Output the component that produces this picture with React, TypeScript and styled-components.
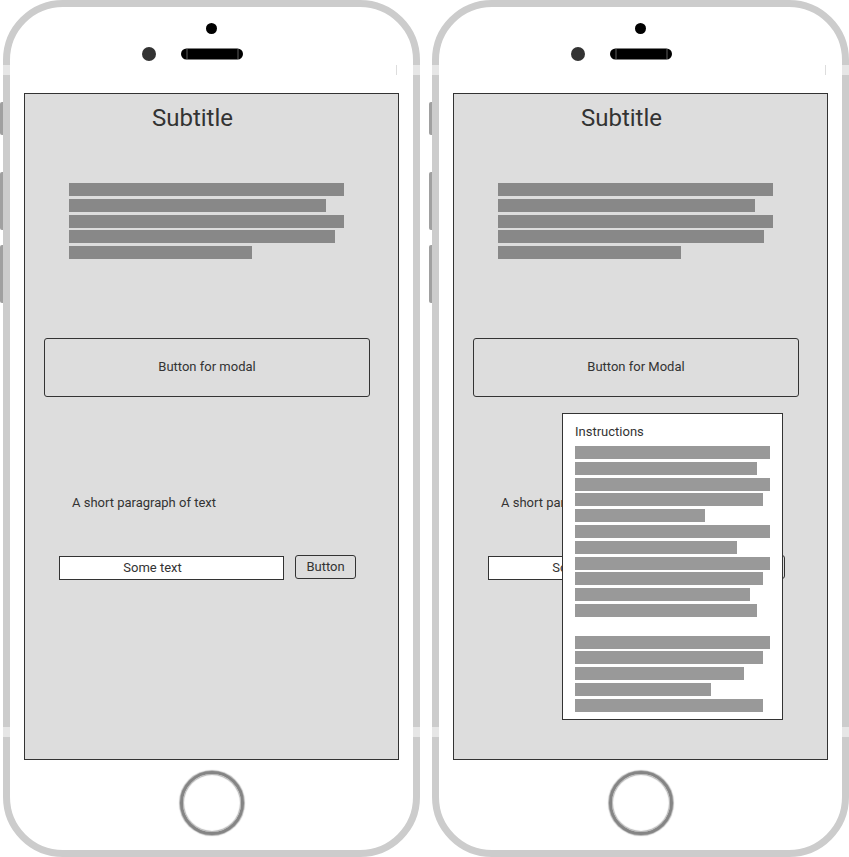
import React from 'react';
import styled, { createGlobalStyle } from 'styled-components';

const GlobalStyle = createGlobalStyle`
  html, body {
    margin: 0;
    padding: 0;
    overflow: hidden;
    background: #fff;
    font-family: Roboto, 'Liberation Sans', Arial, sans-serif;
    color: #333;
  }
`;

const Stage = styled.div`
  display: flex;
  gap: 12px;
  padding-left: 3px;
`;

const Phone = styled.div`
  position: relative;
  box-sizing: border-box;
  width: 417px;
  height: 857px;
  border: 7px solid #ccc;
  border-radius: 60px;
  background: #fff;
  display: flex;
  flex-direction: column;
  align-items: center;
  padding-top: 16px;
`;

const SideKey = styled.div<{ $top: number; $h: number }>`
  position: absolute;
  left: -10px;
  top: ${(p) => p.$top}px;
  width: 3px;
  height: ${(p) => p.$h}px;
  background: #a0a0a0;
  border-radius: 2px 0 0 2px;
`;

/* antenna breaks in the metal frame */
const AntennaBreak = styled.div<{ $side: 'left' | 'right'; $top: number }>`
  position: absolute;
  ${(p) => p.$side}: -7px;
  top: ${(p) => p.$top}px;
  width: 7px;
  height: 10px;
  background: #e6e6e6;
`;

const Tick = styled.div`
  position: absolute;
  left: 386px;
  top: 58px;
  width: 1px;
  height: 10px;
  background: #ddd;
`;

const Camera = styled.div`
  width: 11px;
  height: 11px;
  border-radius: 50%;
  background: #000;
`;

const SensorRow = styled.div`
  display: grid;
  grid-template-columns: 1fr auto 1fr;
  align-items: center;
  width: 100%;
  margin-top: 13px;
`;

const ProximityDot = styled.div`
  justify-self: end;
  width: 14px;
  height: 14px;
  border-radius: 50%;
  background: #333;
  margin-right: 25px;
`;

const Screen = styled.div`
  position: relative;
  box-sizing: border-box;
  width: 375px;
  height: 667px;
  margin-top: 32px;
  border: 1px solid #333;
  background: #ddd;
  display: flex;
  flex-direction: column;
`;

const Subtitle = styled.h2`
  margin: 10px 0 0;
  padding-right: 38px;
  font-size: 24px;
  line-height: 28px;
  font-weight: 400;
  text-align: center;
  color: #333;
`;

const BarBlock = styled.div<{ $gap: number }>`
  display: flex;
  flex-direction: column;
  gap: ${(p) => p.$gap}px;
`;

const IntroBars = styled(BarBlock)`
  margin: 51px 0 0 44px;
`;

const Bar = styled.div<{ $w: number; $tone: string }>`
  width: ${(p) => p.$w}px;
  height: 13px;
  background: ${(p) => p.$tone};
`;

const BlankBar = styled.div`
  height: 13px;
`;

const ModalButton = styled.button`
  box-sizing: border-box;
  width: 326px;
  height: 59px;
  margin: 79px 0 0 19px;
  border: 1px solid #333;
  border-radius: 3px;
  background: transparent;
  font-family: inherit;
  font-size: 13px;
  color: #333;
  padding: 0 0 2px;
`;

const Paragraph = styled.p`
  margin: 98px 0 0 47px;
  font-size: 13px;
  line-height: 15px;
  color: #333;
`;

const FormRow = styled.div`
  display: flex;
  align-items: flex-start;
  gap: 11px;
  margin: 46px 0 0 34px;
`;

const TextField = styled.input`
  box-sizing: border-box;
  width: 225px;
  height: 24px;
  border: 1px solid #333;
  border-radius: 0;
  background: #fff;
  padding: 0 38px 2px 0;
  text-align: center;
  font-family: inherit;
  font-size: 13px;
  color: #333;
  outline: none;
`;

const SmallButton = styled.button`
  box-sizing: border-box;
  width: 61px;
  height: 24px;
  margin-top: -1px;
  border: 1px solid #333;
  border-radius: 3px;
  background: transparent;
  font-family: inherit;
  font-size: 13px;
  color: #333;
  padding: 0 0 2px;
`;

const Modal = styled.div`
  position: absolute;
  left: 108px;
  top: 319px;
  box-sizing: border-box;
  width: 221px;
  height: 307px;
  border: 1px solid #333;
  background: #fff;
  padding: 10px 12px 0;
`;

const ModalTitle = styled.div`
  font-size: 13px;
  line-height: 15px;
  color: #333;
  margin-bottom: 7px;
`;

const HomeButton = styled.div`
  box-sizing: border-box;
  width: 64px;
  height: 64px;
  margin-top: 11px;
  border-radius: 50%;
  border: 3px solid #858585;
  box-shadow: 0 0 1px 1px #b5b5b5, inset 0 0 1px 1px #b5b5b5;
  background: #fff;
`;

const Speaker = () => (
  <svg width="62" height="12" viewBox="0 0 62 12">
    <rect x="0" y="0.5" width="62" height="11" rx="5.5" fill="#000" />
    <line x1="6" y1="1" x2="6" y2="11" stroke="#777" strokeWidth="0.8" />
    <line x1="57" y1="1" x2="57" y2="11" stroke="#777" strokeWidth="0.8" />
  </svg>
);

const introWidths = [275, 257, 275, 266, 183];
const modalWidths: (number | null)[] = [
  195, 182, 195, 188, 130, 195, 162, 195, 188, 175, 182, null, 195, 188, 169, 136, 188,
];

const sideKeys = [
  { top: 95, h: 33 },
  { top: 165, h: 58 },
  { top: 238, h: 58 },
];

function Device({ buttonLabel, withModal }: { buttonLabel: string; withModal: boolean }) {
  return (
    <Phone>
      {sideKeys.map((k) => (
        <SideKey key={k.top} $top={k.top} $h={k.h} />
      ))}
      <AntennaBreak $side="left" $top={58} />
      <AntennaBreak $side="right" $top={58} />
      <AntennaBreak $side="left" $top={720} />
      <AntennaBreak $side="right" $top={720} />
      <Tick />

      <Camera />
      <SensorRow>
        <ProximityDot />
        <Speaker />
        <span />
      </SensorRow>

      <Screen>
        <Subtitle>Subtitle</Subtitle>
        <IntroBars $gap={2.75}>
          {introWidths.map((w, i) => (
            <Bar key={i} $w={w} $tone="#888" />
          ))}
        </IntroBars>
        <ModalButton>{buttonLabel}</ModalButton>
        <Paragraph>A short paragraph of text</Paragraph>
        <FormRow>
          <TextField readOnly defaultValue="Some text" />
          <SmallButton>Button</SmallButton>
        </FormRow>

        {withModal && (
          <Modal>
            <ModalTitle>Instructions</ModalTitle>
            <BarBlock $gap={2.8}>
              {modalWidths.map((w, i) =>
                w ? <Bar key={i} $w={w} $tone="#999" /> : <BlankBar key={i} />
              )}
            </BarBlock>
          </Modal>
        )}
      </Screen>

      <HomeButton />
    </Phone>
  );
}

export default function App() {
  return (
    <>
      <GlobalStyle />
      <Stage>
        <Device buttonLabel="Button for modal" withModal={false} />
        <Device buttonLabel="Button for Modal" withModal={true} />
      </Stage>
    </>
  );
}
